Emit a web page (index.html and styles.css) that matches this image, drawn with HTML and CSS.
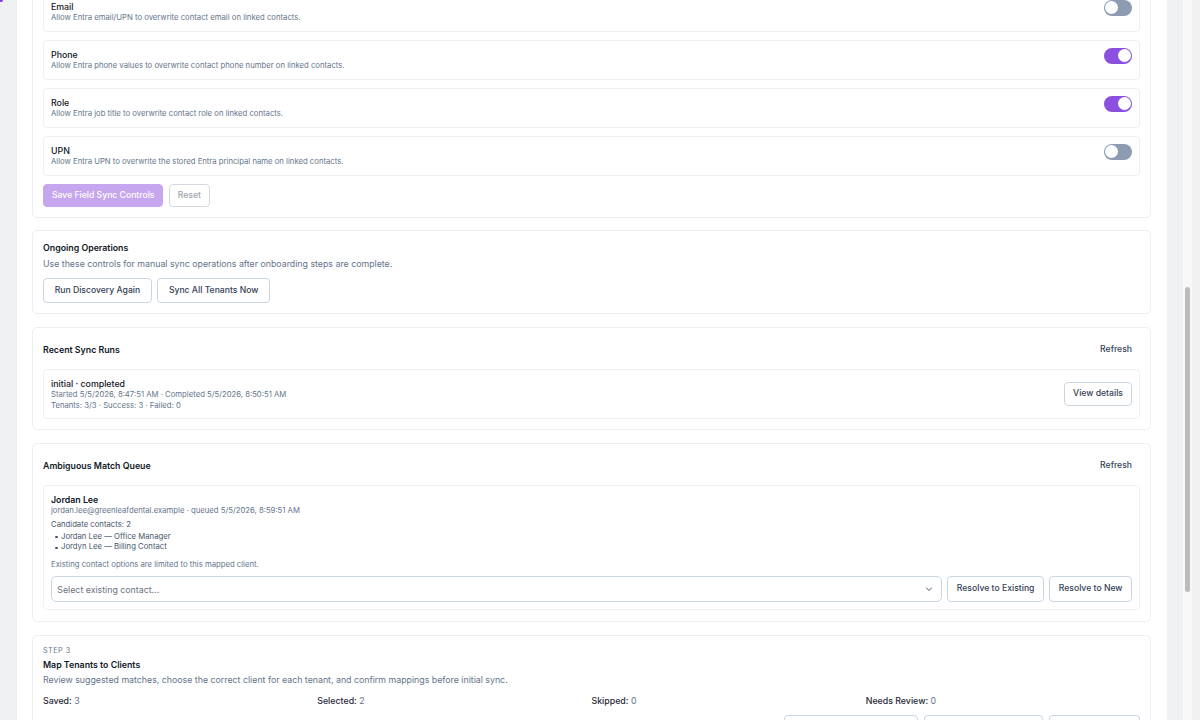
FILE: index.html
```html
<!DOCTYPE html>
<html lang="en">
<head>
<meta charset="utf-8">
<title>Microsoft Entra Integration</title>
<link rel="stylesheet" href="styles.css">
</head>
<body>
<div class="app">
  <aside class="rail"><span class="rail-mark"></span></aside>
  <div class="scroller" id="scroller">
    <main class="panel">
      <div class="stack">

        <section class="card">
          <div class="step-label">Step 1</div>
          <h3 class="card-title">Connect Microsoft Entra</h3>
          <p class="card-desc">Authorize access to your partner tenant so managed customer tenants can be discovered.</p>
          <div class="info-box">
            <div class="info-title">Connected</div>
            <div class="info-meta">Signed in as admin@northwindmsp.example · Consent granted 5/5/2026, 8:41:12 AM</div>
            <div class="info-meta">Partner tenant: northwindmsp.onmicrosoft.com</div>
          </div>
          <div class="actions">
            <button class="btn">Reconnect</button>
            <button class="btn">Disconnect</button>
          </div>
        </section>

        <section class="card">
          <div class="step-label">Step 2</div>
          <h3 class="card-title">Discover Managed Tenants</h3>
          <p class="card-desc">Find customer tenants available through delegated admin relationships.</p>
          <div class="tenant-list">
            <div class="tenant-row"><span class="tenant-name">Greenleaf Dental</span><span class="tenant-meta">greenleafdental.onmicrosoft.com</span></div>
            <div class="tenant-row"><span class="tenant-name">Harbor Logistics</span><span class="tenant-meta">harborlogistics.onmicrosoft.com</span></div>
            <div class="tenant-row"><span class="tenant-name">Summit Legal Group</span><span class="tenant-meta">summitlegal.onmicrosoft.com</span></div>
          </div>
          <div class="actions">
            <button class="btn">Discover Tenants</button>
          </div>
        </section>

        <section class="card">
          <h3 class="card-title">Field Sync Controls</h3>
          <p class="card-desc">Choose which Entra fields may overwrite values on linked contacts.</p>
          <div class="field-list">
            <div class="field-row">
              <div class="field-text"><div class="field-name">Display Name</div><div class="field-help">Allow Entra display name to overwrite contact full name on linked contacts.</div></div>
              <span class="toggle is-on"><span class="knob"></span></span>
            </div>
            <div class="field-row" id="email-row">
              <div class="field-text"><div class="field-name">Email</div><div class="field-help">Allow Entra email/UPN to overwrite contact email on linked contacts.</div></div>
              <span class="toggle"><span class="knob"></span></span>
            </div>
            <div class="field-row">
              <div class="field-text"><div class="field-name">Phone</div><div class="field-help">Allow Entra phone values to overwrite contact phone number on linked contacts.</div></div>
              <span class="toggle is-on"><span class="knob"></span></span>
            </div>
            <div class="field-row">
              <div class="field-text"><div class="field-name">Role</div><div class="field-help">Allow Entra job title to overwrite contact role on linked contacts.</div></div>
              <span class="toggle is-on"><span class="knob"></span></span>
            </div>
            <div class="field-row">
              <div class="field-text"><div class="field-name">UPN</div><div class="field-help">Allow Entra UPN to overwrite the stored Entra principal name on linked contacts.</div></div>
              <span class="toggle"><span class="knob"></span></span>
            </div>
          </div>
          <div class="actions">
            <button class="btn btn-sm btn-primary" disabled>Save Field Sync Controls</button>
            <button class="btn btn-sm btn-muted" disabled>Reset</button>
          </div>
        </section>

        <section class="card">
          <h3 class="card-title">Ongoing Operations</h3>
          <p class="card-desc">Use these controls for manual sync operations after onboarding steps are complete.</p>
          <div class="actions actions-ops">
            <button class="btn">Run Discovery Again</button>
            <button class="btn">Sync All Tenants Now</button>
          </div>
        </section>

        <section class="card">
          <div class="card-head">
            <h3 class="card-title">Recent Sync Runs</h3>
            <button class="btn btn-ghost">Refresh</button>
          </div>
          <div class="run-row">
            <div>
              <div class="run-title">initial · completed</div>
              <div class="run-meta">Started 5/5/2026, 8:47:51 AM · Completed 5/5/2026, 8:50:51 AM</div>
              <div class="run-meta">Tenants: 3/3 · Success: 3 · Failed: 0</div>
            </div>
            <button class="btn btn-sm btn-details">View details</button>
          </div>
        </section>

        <section class="card card-queue">
          <div class="card-head">
            <h3 class="card-title">Ambiguous Match Queue</h3>
            <button class="btn btn-ghost">Refresh</button>
          </div>
          <div class="queue-item">
            <div class="queue-name">Jordan Lee</div>
            <div class="queue-meta">jordan.lee@greenleafdental.example · queued 5/5/2026, 8:59:51 AM</div>
            <div class="queue-count">Candidate contacts: 2</div>
            <ul class="candidates">
              <li>Jordan Lee — Office Manager</li>
              <li>Jordyn Lee — Billing Contact</li>
            </ul>
            <p class="queue-note">Existing contact options are limited to this mapped client.</p>
            <div class="resolve-row">
              <div class="select-box">
                <span class="select-placeholder">Select existing contact...</span>
                <svg class="chevron" width="8" height="8" viewBox="0 0 8 8" aria-hidden="true"><path d="M1.5 3 L4 5.5 L6.5 3" fill="none" stroke="#475569" stroke-width="1" stroke-linecap="round" stroke-linejoin="round"/></svg>
              </div>
              <button class="btn btn-resolve">Resolve to Existing</button>
              <button class="btn btn-resolve">Resolve to New</button>
            </div>
          </div>
        </section>

        <section class="card">
          <div class="step-label">Step 3</div>
          <h3 class="card-title">Map Tenants to Clients</h3>
          <p class="card-desc card-desc-tight">Review suggested matches, choose the correct client for each tenant, and confirm mappings before initial sync.</p>
          <div class="stats">
            <div><span class="stat-label">Saved:</span> <span class="stat-value">3</span></div>
            <div><span class="stat-label">Selected:</span> <span class="stat-value">2</span></div>
            <div><span class="stat-label">Skipped:</span> <span class="stat-value">0</span></div>
            <div><span class="stat-label">Needs Review:</span> <span class="stat-value">0</span></div>
          </div>
          <div class="actions actions-end">
            <button class="btn">Confirm Selected Mapping</button>
            <button class="btn">Accept All Suggestions</button>
            <button class="btn">Skip Unmatched</button>
          </div>
          <div class="tenant-list">
            <div class="tenant-row"><span class="tenant-name">Greenleaf Dental</span><span class="tenant-meta">Mapped to Greenleaf Dental Group</span></div>
            <div class="tenant-row"><span class="tenant-name">Harbor Logistics</span><span class="tenant-meta">Mapped to Harbor Logistics LLC</span></div>
            <div class="tenant-row"><span class="tenant-name">Summit Legal Group</span><span class="tenant-meta">Mapped to Summit Legal</span></div>
          </div>
        </section>

        <section class="card">
          <div class="step-label">Step 4</div>
          <h3 class="card-title">Run Initial Sync</h3>
          <p class="card-desc">Import users from mapped tenants as contacts on their clients.</p>
          <div class="actions">
            <button class="btn">Start Initial Sync</button>
          </div>
        </section>

      </div>
    </main>
  </div>
  <div class="scroll-track" aria-hidden="true"><div class="scroll-thumb"></div></div>
</div>
<script src="script.js"></script>
</body>
</html>
```

FILE: styles.css
```css
* { box-sizing: border-box; }

html, body {
  margin: 0;
  height: 100%;
}

body {
  background: #f0f1f3;
  font-family: Inter, "Noto Sans", "Liberation Sans", sans-serif;
  color: #1f2937;
  overflow: hidden;
}

.app {
  display: flex;
  height: 720px;
  padding-right: 8px;
}

.rail {
  width: 16px;
  flex-shrink: 0;
}

.rail-mark {
  display: block;
  width: 3px;
  height: 2px;
  background: #7c3aed;
  border-bottom-right-radius: 2px;
}

.scroller {
  flex: 1;
  height: 720px;
  overflow-y: scroll;
  scrollbar-width: none;
}

.scroller::-webkit-scrollbar {
  display: none;
}

.scroll-track {
  width: 9px;
  flex-shrink: 0;
  background: #f8f8f8;
}

.scroll-thumb {
  margin: 287px 2px 0;
  height: 305px;
  border-radius: 3px;
  background: #bcbcbc;
}

.panel {
  margin-right: 16px;
  background: #fff;
  border-left: 1px solid #eceef1;
  padding: 16px 16px 16px 15px;
}

.stack {
  display: flex;
  flex-direction: column;
  gap: 12.67px;
}

.card {
  background: #fff;
  border: 1px solid #eceff3;
  border-radius: 5px;
  padding: 10px;
}

.card-queue {
  padding-bottom: 11.5px;
}

.card-head {
  display: flex;
  align-items: center;
  justify-content: space-between;
  height: 24px;
  margin-bottom: 7px;
}

.card-title {
  margin: 0;
  font-size: 8.8px;
  line-height: 13.33px;
  font-weight: 600;
  color: #111827;
}

.card-desc {
  margin: 2.67px 0 0;
  font-size: 8.8px;
  line-height: 13.33px;
  color: #64748b;
}

.card-desc-tight {
  margin-top: 1.67px;
}

.step-label {
  font-size: 7.2px;
  line-height: 10.67px;
  letter-spacing: 0.5px;
  text-transform: uppercase;
  color: #64748b;
  margin-bottom: 1.67px;
}

.actions {
  display: flex;
  gap: 5.33px;
  margin-top: 8px;
}

.actions-ops {
  margin-top: 7.33px;
}

.actions-end {
  justify-content: flex-end;
  gap: 6px;
  margin-top: 7px;
}

.btn {
  font-family: inherit;
  font-size: 8.65px;
  line-height: 13.33px;
  font-weight: 500;
  color: #334155;
  background: #fff;
  border: 1px solid #cbd5e1;
  border-radius: 4px;
  padding: 5px 10.67px;
  white-space: nowrap;
  flex-shrink: 0;
}

.btn-sm {
  padding: 3.67px 8px;
}

.btn-details {
  padding: 4.33px 8px;
}

.btn-resolve {
  padding: 5px 8.5px;
}

.btn-primary {
  background: #c6a6ef;
  border-color: #c6a6ef;
  color: #fff;
}

.btn-muted {
  color: #9ca3af;
  border-color: #d5d9df;
}

.btn-ghost {
  border-color: transparent;
  background: transparent;
  padding: 5px 7px;
}

/* field sync rows */
.field-list {
  display: flex;
  flex-direction: column;
  gap: 8px;
  margin-top: 8px;
}

.field-row {
  display: flex;
  align-items: flex-start;
  justify-content: space-between;
  gap: 10px;
  border: 1px solid #eef0f3;
  border-radius: 4px;
  padding: 7px;
}

.field-name {
  font-size: 8.8px;
  line-height: 13.33px;
  font-weight: 500;
  color: #111827;
}

.field-help {
  font-size: 7.72px;
  line-height: 10.67px;
  color: #64748b;
}

.toggle {
  display: flex;
  align-items: center;
  width: 28.5px;
  height: 16px;
  padding: 1.5px;
  border-radius: 8px;
  background: #8d9cb0;
  flex-shrink: 0;
}

.toggle.is-on {
  background: #8b50e0;
  justify-content: flex-end;
}

.knob {
  width: 13px;
  height: 13px;
  border-radius: 50%;
  background: #fff;
}

/* info / tenants */
.info-box {
  margin-top: 8px;
  border: 1px solid #eef0f3;
  border-radius: 4px;
  padding: 7px;
}

.info-title {
  font-size: 8.8px;
  line-height: 13.33px;
  font-weight: 500;
}

.info-meta {
  font-size: 7.72px;
  line-height: 10.67px;
  color: #64748b;
}

.tenant-list {
  display: flex;
  flex-direction: column;
  gap: 5.33px;
  margin-top: 8px;
}

.tenant-row {
  display: flex;
  justify-content: space-between;
  border: 1px solid #eef0f3;
  border-radius: 4px;
  padding: 9px 8px;
  font-size: 8.8px;
  line-height: 13.33px;
}

.tenant-name {
  font-weight: 500;
}

.tenant-meta {
  color: #64748b;
}

/* recent runs */
.run-row {
  display: flex;
  align-items: center;
  justify-content: space-between;
  border: 1px solid #eef0f3;
  border-radius: 4px;
  padding: 7px;
}

.run-title {
  font-size: 8.8px;
  line-height: 13.33px;
  font-weight: 500;
  color: #111827;
}

.run-meta {
  font-size: 7.72px;
  line-height: 10.67px;
  color: #64748b;
}

/* queue */
.queue-item {
  border: 1px solid #eef0f3;
  border-radius: 4px;
  padding: 7px;
}

.queue-name {
  font-size: 8.8px;
  line-height: 13.33px;
  font-weight: 600;
  color: #111827;
}

.queue-meta {
  font-size: 7.72px;
  line-height: 10.67px;
  color: #64748b;
}

.queue-count {
  margin-top: 2.67px;
  font-size: 7.72px;
  line-height: 10.67px;
  color: #475569;
}

.candidates {
  list-style: none;
  margin: 1.33px 0 0;
  padding: 0;
  font-size: 7.72px;
  line-height: 10.67px;
  color: #475569;
}

.candidates li {
  display: flex;
  align-items: center;
  gap: 3.5px;
}

.candidates li::before {
  content: "";
  width: 2.5px;
  height: 2.5px;
  margin-left: 4px;
  border-radius: 50%;
  background: #475569;
  flex-shrink: 0;
}

.queue-note {
  margin: 7.33px 0 0;
  font-size: 7.72px;
  line-height: 10.67px;
  color: #64748b;
}

.resolve-row {
  display: flex;
  gap: 5.33px;
  margin-top: 5.33px;
}

.select-box {
  flex: 1;
  display: flex;
  align-items: center;
  justify-content: space-between;
  height: 25.33px;
  border: 1px solid #cbd5e1;
  border-radius: 5px;
  padding: 0 8px 0 5.33px;
}

.select-placeholder {
  font-size: 8.8px;
  color: #6b7280;
}

.chevron {
  display: block;
}

/* step 3 stats */
.stats {
  display: grid;
  grid-template-columns: repeat(4, 1fr);
  margin-top: 7.67px;
  font-size: 8.8px;
  line-height: 13.33px;
}

.stat-label {
  font-weight: 500;
  color: #1f2937;
}

.stat-value {
  color: #64748b;
}
```

FILE: script.js
```js
(function () {
  var scroller = document.getElementById('scroller');
  var anchor = document.getElementById('email-row');
  function place() {
    var top = anchor.getBoundingClientRect().top - scroller.getBoundingClientRect().top + scroller.scrollTop;
    scroller.scrollTop = top + 8;
  }
  place();
  window.addEventListener('load', place);
  if (document.fonts && document.fonts.ready) {
    document.fonts.ready.then(place);
  }
})();
```
